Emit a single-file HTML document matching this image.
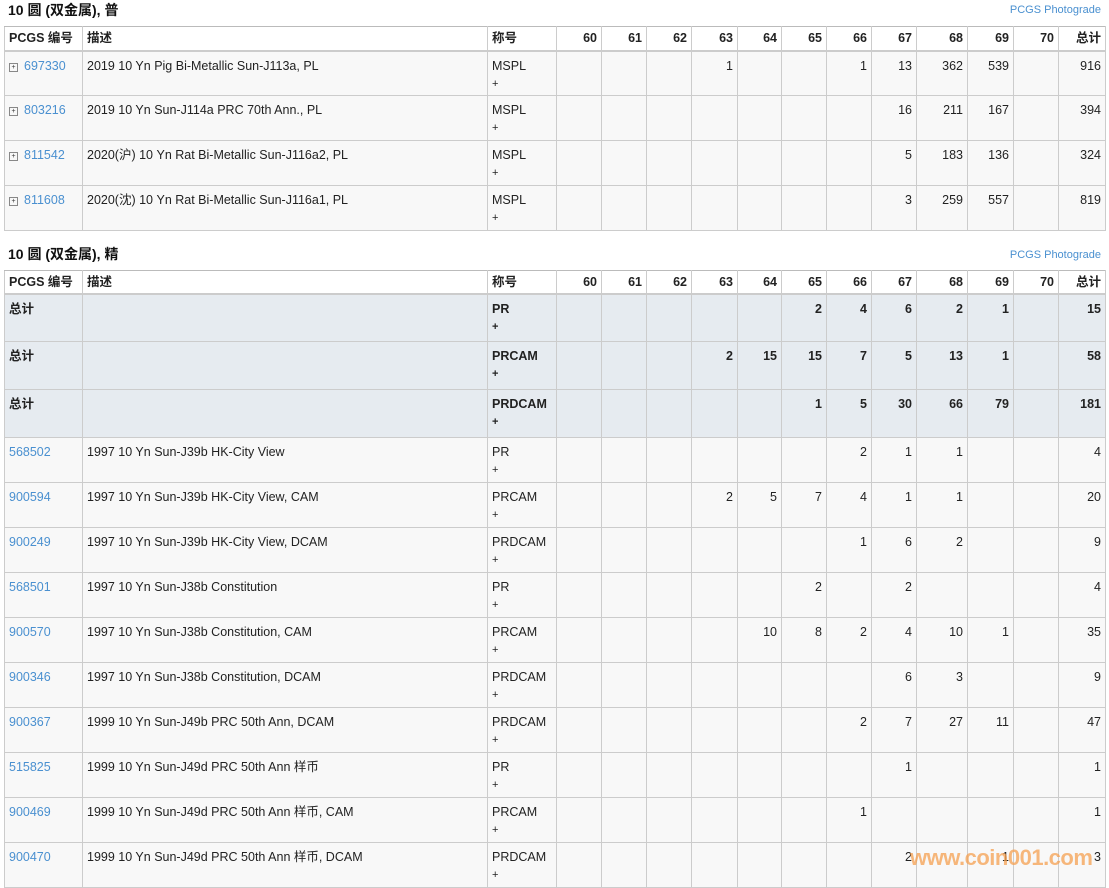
<!DOCTYPE html>
<html><head><meta charset="utf-8"><style>
body{margin:0;background:#fff;font-family:"Liberation Sans","Noto Sans CJK SC",sans-serif;font-size:12.5px;color:#222;width:1109px;height:885px;overflow:hidden;position:relative}
.t{position:absolute;left:8px;font-weight:bold;font-size:14px;color:#111}
.pg{position:absolute;right:8px;font-size:11px;color:#4a90d0}
table{position:absolute;left:4px;border-collapse:collapse;table-layout:fixed;width:1101px}
td,th{border:1px solid #ccc;padding:0 4px;vertical-align:top;overflow:hidden;white-space:nowrap;line-height:16px}
th{height:24px;box-sizing:border-box;vertical-align:middle;font-weight:bold;text-align:right;background:#fff;border-top:1px solid #bbb;border-bottom:2px solid #ccc}
.t2 th{height:23px}
th.l{text-align:left}
tr.d td{height:45px;background:#f8f8f8;padding-top:6px;box-sizing:border-box}
tr.s td{height:48px;background:#e6ebf0;padding-top:6px;box-sizing:border-box;font-weight:bold}
td.n{text-align:right}
a{color:#4a90d0;text-decoration:none}
.p{font-size:11px;line-height:20px}
.b{display:inline-block;width:7px;height:7px;border:1px solid #888;font-size:7px;line-height:7px;text-align:center;margin-right:6px;vertical-align:1px;color:#333}
.wm{position:absolute;left:910px;top:845px;font-family:"Liberation Sans",sans-serif;font-weight:bold;font-size:22px;color:rgba(245,160,80,0.75);letter-spacing:-0.5px}
</style></head><body>
<div class="t" style="top:0">10 圆 (双金属), 普</div>
<div class="pg" style="top:4px">PCGS Photograde</div>
<table style="top:26px">
<colgroup><col style="width:78px"><col style="width:405px"><col style="width:69px"><col style="width:45px"><col style="width:45px"><col style="width:45px"><col style="width:46px"><col style="width:44px"><col style="width:45px"><col style="width:45px"><col style="width:45px"><col style="width:51px"><col style="width:46px"><col style="width:45px"><col style="width:47px"></colgroup>
<tr><th class="l">PCGS 编号</th><th class="l">描述</th><th class="l">称号</th><th>60</th><th>61</th><th>62</th><th>63</th><th>64</th><th>65</th><th>66</th><th>67</th><th>68</th><th>69</th><th>70</th><th>总计</th></tr>
<tr class="d"><td><span class="b">+</span><a>697330</a></td><td>2019 10 Yn Pig Bi-Metallic Sun-J113a, PL</td><td>MSPL<div class="p">+</div></td><td></td><td></td><td></td><td class="n">1</td><td></td><td></td><td class="n">1</td><td class="n">13</td><td class="n">362</td><td class="n">539</td><td></td><td class="n">916</td></tr>
<tr class="d"><td><span class="b">+</span><a>803216</a></td><td>2019 10 Yn Sun-J114a PRC 70th Ann., PL</td><td>MSPL<div class="p">+</div></td><td></td><td></td><td></td><td></td><td></td><td></td><td></td><td class="n">16</td><td class="n">211</td><td class="n">167</td><td></td><td class="n">394</td></tr>
<tr class="d"><td><span class="b">+</span><a>811542</a></td><td>2020(沪) 10 Yn Rat Bi-Metallic Sun-J116a2, PL</td><td>MSPL<div class="p">+</div></td><td></td><td></td><td></td><td></td><td></td><td></td><td></td><td class="n">5</td><td class="n">183</td><td class="n">136</td><td></td><td class="n">324</td></tr>
<tr class="d"><td><span class="b">+</span><a>811608</a></td><td>2020(沈) 10 Yn Rat Bi-Metallic Sun-J116a1, PL</td><td>MSPL<div class="p">+</div></td><td></td><td></td><td></td><td></td><td></td><td></td><td></td><td class="n">3</td><td class="n">259</td><td class="n">557</td><td></td><td class="n">819</td></tr>
</table>
<div class="t" style="top:244px">10 圆 (双金属), 精</div>
<div class="pg" style="top:249px">PCGS Photograde</div>
<table class="t2" style="top:270px">
<colgroup><col style="width:78px"><col style="width:405px"><col style="width:69px"><col style="width:45px"><col style="width:45px"><col style="width:45px"><col style="width:46px"><col style="width:44px"><col style="width:45px"><col style="width:45px"><col style="width:45px"><col style="width:51px"><col style="width:46px"><col style="width:45px"><col style="width:47px"></colgroup>
<tr><th class="l">PCGS 编号</th><th class="l">描述</th><th class="l">称号</th><th>60</th><th>61</th><th>62</th><th>63</th><th>64</th><th>65</th><th>66</th><th>67</th><th>68</th><th>69</th><th>70</th><th>总计</th></tr>
<tr class="s"><td>总计</td><td></td><td>PR<div class="p">+</div></td><td></td><td></td><td></td><td></td><td></td><td class="n">2</td><td class="n">4</td><td class="n">6</td><td class="n">2</td><td class="n">1</td><td></td><td class="n">15</td></tr>
<tr class="s"><td>总计</td><td></td><td>PRCAM<div class="p">+</div></td><td></td><td></td><td></td><td class="n">2</td><td class="n">15</td><td class="n">15</td><td class="n">7</td><td class="n">5</td><td class="n">13</td><td class="n">1</td><td></td><td class="n">58</td></tr>
<tr class="s"><td>总计</td><td></td><td>PRDCAM<div class="p">+</div></td><td></td><td></td><td></td><td></td><td></td><td class="n">1</td><td class="n">5</td><td class="n">30</td><td class="n">66</td><td class="n">79</td><td></td><td class="n">181</td></tr>
<tr class="d"><td><a>568502</a></td><td>1997 10 Yn Sun-J39b HK-City View</td><td>PR<div class="p">+</div></td><td></td><td></td><td></td><td></td><td></td><td></td><td class="n">2</td><td class="n">1</td><td class="n">1</td><td></td><td></td><td class="n">4</td></tr>
<tr class="d"><td><a>900594</a></td><td>1997 10 Yn Sun-J39b HK-City View, CAM</td><td>PRCAM<div class="p">+</div></td><td></td><td></td><td></td><td class="n">2</td><td class="n">5</td><td class="n">7</td><td class="n">4</td><td class="n">1</td><td class="n">1</td><td></td><td></td><td class="n">20</td></tr>
<tr class="d"><td><a>900249</a></td><td>1997 10 Yn Sun-J39b HK-City View, DCAM</td><td>PRDCAM<div class="p">+</div></td><td></td><td></td><td></td><td></td><td></td><td></td><td class="n">1</td><td class="n">6</td><td class="n">2</td><td></td><td></td><td class="n">9</td></tr>
<tr class="d"><td><a>568501</a></td><td>1997 10 Yn Sun-J38b Constitution</td><td>PR<div class="p">+</div></td><td></td><td></td><td></td><td></td><td></td><td class="n">2</td><td></td><td class="n">2</td><td></td><td></td><td></td><td class="n">4</td></tr>
<tr class="d"><td><a>900570</a></td><td>1997 10 Yn Sun-J38b Constitution, CAM</td><td>PRCAM<div class="p">+</div></td><td></td><td></td><td></td><td></td><td class="n">10</td><td class="n">8</td><td class="n">2</td><td class="n">4</td><td class="n">10</td><td class="n">1</td><td></td><td class="n">35</td></tr>
<tr class="d"><td><a>900346</a></td><td>1997 10 Yn Sun-J38b Constitution, DCAM</td><td>PRDCAM<div class="p">+</div></td><td></td><td></td><td></td><td></td><td></td><td></td><td></td><td class="n">6</td><td class="n">3</td><td></td><td></td><td class="n">9</td></tr>
<tr class="d"><td><a>900367</a></td><td>1999 10 Yn Sun-J49b PRC 50th Ann, DCAM</td><td>PRDCAM<div class="p">+</div></td><td></td><td></td><td></td><td></td><td></td><td></td><td class="n">2</td><td class="n">7</td><td class="n">27</td><td class="n">11</td><td></td><td class="n">47</td></tr>
<tr class="d"><td><a>515825</a></td><td>1999 10 Yn Sun-J49d PRC 50th Ann 样币</td><td>PR<div class="p">+</div></td><td></td><td></td><td></td><td></td><td></td><td></td><td></td><td class="n">1</td><td></td><td></td><td></td><td class="n">1</td></tr>
<tr class="d"><td><a>900469</a></td><td>1999 10 Yn Sun-J49d PRC 50th Ann 样币, CAM</td><td>PRCAM<div class="p">+</div></td><td></td><td></td><td></td><td></td><td></td><td></td><td class="n">1</td><td></td><td></td><td></td><td></td><td class="n">1</td></tr>
<tr class="d"><td><a>900470</a></td><td>1999 10 Yn Sun-J49d PRC 50th Ann 样币, DCAM</td><td>PRDCAM<div class="p">+</div></td><td></td><td></td><td></td><td></td><td></td><td></td><td></td><td class="n">2</td><td></td><td class="n">1</td><td></td><td class="n">3</td></tr>
</table>
<div class="wm">www.coin001.com</div>
</body></html>
